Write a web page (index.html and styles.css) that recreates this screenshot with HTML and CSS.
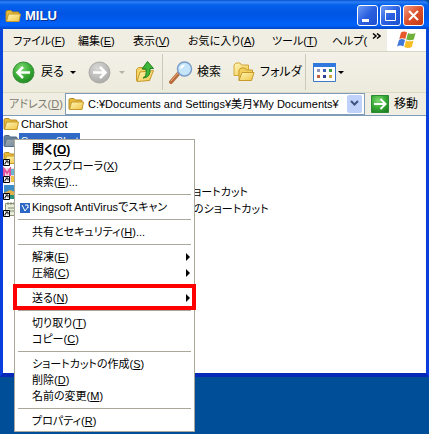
FILE: index.html
```html
<!DOCTYPE html>
<html lang="ja">
<head>
<meta charset="utf-8">
<meta name="viewport" content="width=device-width, initial-scale=1">
<title>MILU</title>
<link rel="stylesheet" href="styles.css">
</head>
<body>

<!-- shared shapes -->
<svg class="defs" width="0" height="0">
  <defs>
    <linearGradient id="gold" x1="0" y1="0" x2="1" y2="1">
      <stop offset="0" stop-color="#fff6b8"/>
      <stop offset="1" stop-color="#f0c544"/>
    </linearGradient>
    <radialGradient id="green" cx="0.4" cy="0.3" r="0.8">
      <stop offset="0" stop-color="#7ed873"/>
      <stop offset="0.5" stop-color="#3cae38"/>
      <stop offset="1" stop-color="#1c7f1f"/>
    </radialGradient>
    <radialGradient id="gray" cx="0.4" cy="0.3" r="0.8">
      <stop offset="0" stop-color="#d9d9d7"/>
      <stop offset="1" stop-color="#a5a5a3"/>
    </radialGradient>
    <symbol id="folder" viewBox="0 0 16 16">
      <path d="M1 13V4q0-1.500 1.500-1.500h3.500l1.500 1.500h5.500q1 0 1 1v8z" fill="#e9b93a" stroke="#b08a22"/>
      <path d="M1.500 13.500L3.500 6h12l-1.500 7.500z" fill="url(#gold)" stroke="#c79a2b"/>
    </symbol>
    <symbol id="shortcut" viewBox="0 0 7 7">
      <path d="M0.500 0.500h6v6h-6z" fill="#fff" stroke="#000"/>
      <path d="M2 5.500V4l2-1.500M2.500 2h2.500v2.500" fill="none" stroke="#000"/>
    </symbol>
  </defs>
</svg>

<div class="window">
  <div class="titlebar">
    <svg class="icon"><use href="#folder"/></svg>
    <h1>MILU</h1>
    <button class="caption" aria-label="最小化"><svg width="19" height="19"><path d="M4 13h7v3h-7z" fill="#fff"/></svg></button>
    <button class="caption" aria-label="最大化"><svg width="19" height="19"><path d="M4.500 5h10v9.500h-10z" fill="none" stroke="#fff"/><path d="M4 4h11v3h-11z" fill="#fff"/></svg></button>
    <button class="caption close" aria-label="閉じる"><svg width="19" height="19"><path d="M5 5l9 9M14 5l-9 9" stroke="#fff" stroke-width="2"/></svg></button>
  </div>

  <div class="menubar">
    <div class="menus">
      <button>ファイル(<u>F</u>)</button>
      <button>編集(<u>E</u>)</button>
      <button>表示(<u>V</u>)</button>
      <button>お気に入り(<u>A</u>)</button>
      <button>ツール(<u>T</u>)</button>
      <button>ヘルプ(</button>
    </div>
    <button class="more" aria-label="その他">
      <svg width="9" height="7"><path d="M1 0.500l3 2.500l-3 2.500M5 0.500l3 2.500l-3 2.500" fill="none" stroke="#000" stroke-width="1.500"/></svg>
    </button>
    <div class="flag">
      <svg width="20" height="18" viewBox="0 0 20 18">
        <path d="M4 1.500q3-2 6 0l-1.700 6.500q-3-1.500-6 0z" fill="#e8592b"/>
        <path d="M11 2q3.500 1.700 7.500 0l-1.700 6.500q-4 1.500-7.500 0z" fill="#6fb13c"/>
        <path d="M2 9q3-1.800 6 0l-1.700 6.500q-3-1.800-6.300 0z" fill="#3f78d8"/>
        <path d="M9 9.500q3.500 1.700 7.500 0l-1.700 6.500q-4 1.800-7.500 0z" fill="#f6bd27"/>
      </svg>
    </div>
  </div>

  <div class="toolbar">
    <button class="back">
      <svg width="23" height="23"><circle cx="11.500" cy="11.500" r="10.500" fill="url(#green)" stroke="#3a8f3a"/><path d="M18 11.500H6M11 6l-5.500 5.500l5.500 5.500" fill="none" stroke="#fff" stroke-width="2.500"/></svg>
      <span>戻る</span>
      <i class="down"></i>
    </button>
    <button class="forward" aria-label="進む" disabled>
      <svg width="23" height="23"><circle cx="11.500" cy="11.500" r="10.500" fill="url(#gray)" stroke="#a9a9a6"/><path d="M5 11.500H17M12 6l5.500 5.500l-5.500 5.500" fill="none" stroke="#fff" stroke-width="2.500"/></svg>
      <i class="down"></i>
    </button>
    <button class="up" aria-label="上へ">
      <svg width="20" height="22" viewBox="0 0 20 22">
        <path d="M1.500 19.500V8.500l2-2h4l1 2h6v11z" fill="#f3d566" stroke="#c79a2b"/>
        <path d="M2 20.500L5 11l13.500-1.500l-4 10z" fill="url(#gold)" stroke="#c79a2b"/>
        <path d="M8 17q4-1 3-9h-4l5.500-7.500l6 7h-3.500q1 9-7 9.500z" fill="#3fb53a" stroke="#1f7f20"/>
      </svg>
    </button>
    <button class="search">
      <svg width="24" height="23" viewBox="0 0 24 23">
        <path d="M9.500 12.500l-7.500 8.500" stroke="#b86b3c" stroke-width="4" stroke-linecap="round"/>
        <path d="M9 12l-7 8" stroke="#e9ae7c" stroke-linecap="round"/>
        <circle cx="15.500" cy="8" r="7" fill="#c5e6fa" stroke="#7c9cc8" stroke-width="1.500"/>
        <path d="M11 8q0-4.500 5-4.500q-1 3-5 4.500" fill="#fff"/>
      </svg>
      <span>検索</span>
    </button>
    <button class="folders">
      <svg width="22" height="20" viewBox="0 0 22 20">
        <path d="M1 13.500V3l2-2h4l1.500 2h7v10.500z" fill="url(#gold)" stroke="#d1a73c"/>
        <path d="M6 18.500V8l2-2h4l1.500 2h6v3" fill="#f2cf5d" stroke="#c79a2b"/>
        <path d="M6 18.500L9 10.500h12l-2.500 8z" fill="url(#gold)" stroke="#c79a2b"/>
      </svg>
      <span>フォルダ</span>
    </button>
    <button class="views" aria-label="表示">
      <svg width="23" height="19" viewBox="0 0 23 19">
        <path d="M0.500 0.500h22v18h-22z" fill="#fff" stroke="#3a78c8"/>
        <path d="M0 0h23v4h-23z" fill="#2f78dd"/>
        <path d="M4 6h3v3h-3z" fill="#8d94b8"/><path d="M10 6h3v3h-3z" fill="#3c62b5"/><path d="M16 6h3v3h-3z" fill="#3f9b4a"/>
        <path d="M4 12h3v3h-3z" fill="#c0603c"/><path d="M10 12h3v3h-3z" fill="#2d3f90"/><path d="M16 12h3v3h-3z" fill="#c9a640"/>
      </svg>
      <i class="down"></i>
    </button>
  </div>

  <form class="addressbar">
    <label for="address">アドレス(<u>D</u>)</label>
    <div class="combo">
      <svg class="icon"><use href="#folder"/></svg>
      <input type="text" id="address" value="C:¥Documents and Settings¥美月¥My Documents¥">
      <button type="button" class="drop" aria-label="履歴"><svg width="9" height="7"><path d="M1 1l3.500 3.500l3.500-3.500" fill="none" stroke="#3f5480" stroke-width="2"/></svg></button>
    </div>
    <button type="button" class="go">
      <svg width="18" height="18"><path d="M0.500 0.500h17v17h-17z" fill="url(#green)" stroke="#2b8a35"/><path d="M3 9h11M9.500 4l5 5l-5 5" fill="none" stroke="#fff" stroke-width="2"/></svg>
      <span>移動</span>
    </button>
  </form>

  <ul class="files">
    <li><svg class="icon"><use href="#folder"/></svg><span>CharShot</span></li>
    <li class="selected"><svg class="icon"><use href="#folder"/></svg><span>ScreenShot</span></li>
    <li><svg class="icon"><use href="#folder"/><use href="#shortcut" y="9" width="7" height="7"/></svg></li>
    <li>
      <svg class="icon" viewBox="0 0 16 16">
        <path d="M1 1h14v14h-14z" fill="#f5d4e2"/><path d="M1 9V2l3 4l3-4v7" fill="none" stroke="#e0529a" stroke-width="2"/><path d="M8 2h7v6h-7z" fill="#64b7cf"/><path d="M8 9h7v6h-7z" fill="#f0c544"/>
        <use href="#shortcut" y="9" width="7" height="7"/>
      </svg>
    </li>
    <li>
      <svg class="icon" viewBox="0 0 16 16">
        <path d="M1 1h14v14h-14z" fill="#3c8cc8"/><path d="M1 9l6-3l8 3v6h-14z" fill="#e2b04a"/><path d="M6 11h9v4h-9z" fill="#2c8f79"/>
        <use href="#shortcut" y="9" width="7" height="7"/>
      </svg>
      <span class="link">ショートカット</span>
    </li>
    <li>
      <svg class="icon" viewBox="0 0 16 16">
        <path d="M2.500 2.500h12v12h-12z" fill="#e9ecd9" stroke="#8a927c"/><path d="M5 1v3M8 1v3M11 1v3M5 7h7M5 10h7" stroke="#7a8a6c"/>
        <use href="#shortcut" y="9" width="7" height="7"/>
      </svg>
      <span class="link long">のショートカット</span>
    </li>
  </ul>

  <div class="context">
    <button class="default">開く(<u>O</u>)</button>
    <button>エクスプローラ(<u>X</u>)</button>
    <button>検索(<u>E</u>)...</button>
    <hr>
    <button>
      <svg class="scan" width="10" height="10"><path d="M0 0h10v10h-10z" fill="#2b66c4"/><path d="M2 2l3 6l3-4M5 2h3v3" fill="none" stroke="#fff"/></svg>Kingsoft AntiVirusでスキャン
    </button>
    <hr>
    <button>共有とセキュリティ(<u>H</u>)...</button>
    <hr>
    <button class="sub">解凍(<u>E</u>)</button>
    <button class="sub">圧縮(<u>C</u>)</button>
    <hr>
    <button class="sub marked">送る(<u>N</u>)</button>
    <hr>
    <button>切り取り(<u>T</u>)</button>
    <button>コピー(<u>C</u>)</button>
    <hr>
    <button>ショートカットの作成(<u>S</u>)</button>
    <button>削除(<u>D</u>)</button>
    <button>名前の変更(<u>M</u>)</button>
    <hr>
    <button>プロパティ(<u>R</u>)</button>
  </div>
</div>

</body>
</html>
```

FILE: styles.css
```css
* {
  box-sizing: border-box;
}

body {
  margin: 0;
  min-height: 100vh;
  background: #004e98;
  color: #000;
  font: 11px/16px "Liberation Sans", "Noto Sans CJK JP", sans-serif;
  font-feature-settings: "palt";
}

button, input {
  font: inherit;
  font-feature-settings: inherit;
  color: inherit;
  border: 0;
  margin: 0;
  padding: 0;
  background: none;
  white-space: nowrap;
}

svg {
  display: block;
  flex: none;
}

.defs {
  position: absolute;
}

.icon {
  width: 16px;
  height: 16px;
}

.window {
  position: relative;
}

/* title bar */
.titlebar {
  display: flex;
  align-items: center;
  gap: 2px;
  height: 29px;
  padding: 2px 5px 0;
  border-radius: 0 6px 0 0;
  background: linear-gradient(#0a4fd0 0, #2a80f5 2px, #0560ea 5px, #0054e3 14px, #0062fa 25px, #0047c8 29px);
}

.titlebar h1 {
  flex: 1;
  margin: 0;
  padding-left: 2px;
  color: #fff;
  font-size: 13px;
  text-shadow: 1px 1px #0a2f8c;
}

.caption {
  width: 21px;
  height: 21px;
  border: 1px solid #fff;
  border-radius: 3px;
  background: linear-gradient(135deg, #6f9bf5, #2a60e0 50%, #1b4fd0);
}

.close {
  background: linear-gradient(135deg, #f09a80, #dd4f2a 50%, #c23a14);
}

/* bars */
.menubar, .toolbar, .addressbar {
  display: flex;
  align-items: center;
  border: solid #0845d8;
  border-width: 0 3px;
  background: #f0eee2;
}

.menubar {
  height: 23px;
  box-shadow: inset 0 -1px #d8d4c4;
}

.menus {
  flex: 1;
  display: grid;
  grid-template-columns: 65px 55px 55px 84px 60px 40px;
  padding-left: 10px;
}

.menus button {
  text-align: left;
}

.more {
  align-self: flex-start;
  padding: 4px 6px 0 0;
}

.flag {
  display: flex;
  align-items: center;
  justify-content: center;
  align-self: stretch;
  width: 39px;
  border-bottom: 1px solid #d8d4c4;
  background: #fff;
}

.toolbar {
  height: 40px;
  padding-left: 9px;
  background: linear-gradient(#f3f1e8, #edebdc);
  font-size: 12px;
}

.toolbar button {
  display: flex;
  align-items: center;
}

.down {
  border: 3px solid transparent;
  border-top-color: #000;
  border-bottom: 0;
}

.back {
  gap: 5px;
}

.back span {
  width: 25px;
}

.forward {
  gap: 8px;
  margin-left: 12px;
}

.forward .down {
  border-top-color: #b5b3a8;
}

.toolbar .up {
  height: 36px;
  margin-left: 10px;
  padding-right: 7px;
  border-right: 1px solid #cdc9b8;
}

.search {
  gap: 4px;
  margin-left: 6px;
}

.folders {
  gap: 5px;
  margin-left: 12px;
}

.folders span {
  width: 45px;
  text-align: left;
}

.toolbar .views {
  gap: 2px;
  height: 36px;
  padding-left: 7px;
  border-left: 1px solid #cdc9b8;
}

.addressbar {
  height: 23px;
  padding: 0 8px 0 6px;
  box-shadow: inset 0 1px #dcd8c8;
}

.addressbar label {
  width: 56px;
  color: #7d7b70;
  white-space: nowrap;
}

.combo {
  flex: 1;
  display: flex;
  align-items: center;
  min-width: 0;
  height: 22px;
  padding: 0 2px;
  border: 1px solid #7f9db9;
  background: #fff;
}

.combo input {
  flex: 1;
  min-width: 0;
  padding-left: 4px;
  outline: none;
}

.drop {
  display: flex;
  align-items: center;
  justify-content: center;
  width: 15px;
  height: 18px;
  border-radius: 2px;
  background: #c1d2fa;
}

.go {
  display: flex;
  align-items: center;
  gap: 5px;
  margin-left: 6px;
  font-size: 12px;
}

/* file list */
.files {
  min-height: 262px;
  margin: 0;
  padding: 0;
  border: solid #0b3fdc;
  border-width: 0 3px 4px;
  border-bottom-color: #0828b8;
  background: #fff;
  box-shadow: inset 0 1px #7f9db9;
  list-style: none;
}

.files li {
  display: flex;
  align-items: center;
  height: 17px;
}

.files span {
  padding: 0 2px;
  white-space: nowrap;
}

.selected span {
  background: #316ac5;
  color: #fff;
}

.selected .icon {
  filter: hue-rotate(170deg) saturate(0.5) brightness(0.7);
}

.files .link {
  padding-left: 164px;
}

.files .long {
  padding-left: 174px;
}

/* context menu */
.context {
  position: absolute;
  top: 139px;
  left: 14px;
  width: 181px;
  padding: 2px;
  border: 1px solid #aca899;
  background: #fff;
}

.context button {
  display: block;
  position: relative;
  width: 100%;
  height: 16px;
  padding-left: 15px;
  text-align: left;
}

.context hr {
  height: 1px;
  margin: 4px 1px;
  border: 0;
  background: #aca899;
}

.context .default {
  font-size: 12px;
  font-weight: bold;
}

.scan {
  position: absolute;
  top: 4px;
  left: 3px;
}

.sub::before {
  content: "";
  position: absolute;
  top: 4px;
  right: 2px;
  border: 4px solid transparent;
  border-left-color: #000;
  border-right: 0;
}

.marked::after {
  content: "";
  position: absolute;
  inset: -6px -4px -4px -4px;
  border: 4px solid #f00;
}
```
